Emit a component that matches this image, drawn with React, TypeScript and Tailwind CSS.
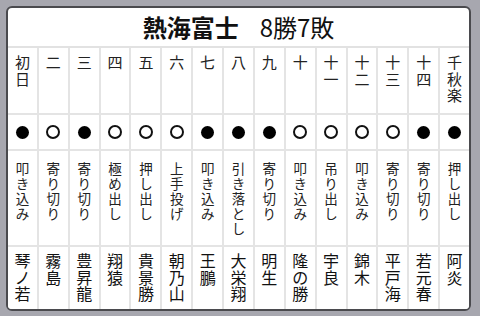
const DAYS = ["初日", "二", "三", "四", "五", "六", "七", "八", "九", "十", "十一", "十二", "十三", "十四", "千秋楽"];

// true = 勝 (white), false = 敗 (black)
const WINS = [false, true, false, true, true, true, false, false, false, true, true, true, true, false, false];

const KIMARITE = [
  "叩き込み", "寄り切り", "寄り切り", "極め出し", "押し出し", "上手投げ", "叩き込み", "引き落とし",
  "寄り切り", "叩き込み", "吊り出し", "叩き込み", "寄り切り", "寄り切り", "押し出し",
];

const OPPONENTS = [
  "琴ノ若", "霧島", "豊昇龍", "翔猿", "貴景勝", "朝乃山", "王鵬", "大栄翔",
  "明生", "隆の勝", "宇良", "錦木", "平戸海", "若元春", "阿炎",
];

const font = "font-['Noto_Sans_CJK_JP','Noto_Sans',sans-serif]";

export default function App() {
  return (
    <div className={`w-[480px] h-[316px] bg-[#a7a7af] pt-[6px] pl-[6px] ${font}`}>
      <div className="w-[465px] h-[305px] bg-white border-2 border-[#4a4a4e] rounded-[6px] overflow-hidden flex flex-col">

        {/* Title */}
        <div className="h-[40px] flex items-center justify-center text-[#111] border-b-2 border-[#e2e2e2]">
          <span className="text-[24px] font-bold">熱海富士</span>
          <span className="text-[24px] ml-[21px]">8勝7敗</span>
        </div>

        {/* Table */}
        <div className="flex-1 grid grid-cols-15 grid-rows-[65px_34px_94px_1fr] gap-[2px] bg-[#e4e4e4]">
          {DAYS.map((d) => (
            <div key={d} className="bg-white flex justify-center pt-[6px]">
              <div className="w-[16px] text-[15px] leading-[16.5px] text-[#222] break-all text-center">{d}</div>
            </div>
          ))}

          {WINS.map((w, i) => (
            <div key={i} className="bg-white flex items-center justify-center">
              {w ? (
                <div className="w-[14px] h-[14px] rounded-full border-2 border-[#111]" />
              ) : (
                <div className="w-[13px] h-[13px] rounded-full bg-black" />
              )}
            </div>
          ))}

          {KIMARITE.map((k, i) => (
            <div key={i} className="bg-white flex justify-center pt-[10px]">
              <div className="w-[14px] text-[13.5px] leading-[15px] text-[#222] break-all text-center">{k}</div>
            </div>
          ))}

          {OPPONENTS.map((n) => (
            <div key={n} className="bg-white flex justify-center pt-[5px]">
              <div className="w-[16px] text-[16px] leading-[16.5px] text-[#111] break-all text-center">{n}</div>
            </div>
          ))}
        </div>

      </div>
    </div>
  );
}
